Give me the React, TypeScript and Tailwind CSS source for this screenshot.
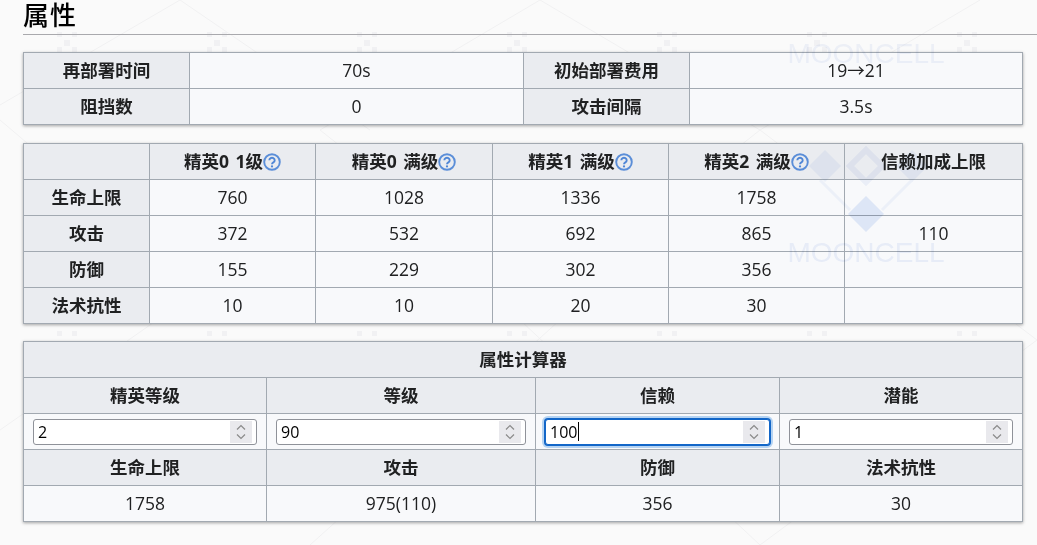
const body = { fontFamily: '"Open Sans", "Noto Sans CJK SC", sans-serif' };

function Help() {
  return (
    <svg viewBox="0 0 18 18" className="inline-block h-[18px] w-[18px] align-[-3px]">
      <circle cx="9" cy="9" r="7.8" fill="none" stroke="#5b8ed8" strokeWidth="1.9" />
      <path d="M6.3 7.2a2.7 2.4 0 1 1 4.1 2.1c-.9.6-1.4 1-1.4 2" fill="none" stroke="#4f86d6" strokeWidth="1.9" />
      <circle cx="9" cy="13.4" r="1.1" fill="#4f86d6" />
    </svg>
  );
}

function Th({ children, colSpan }: { children?: React.ReactNode; colSpan?: number }) {
  return (
    <th colSpan={colSpan} className="h-9 border border-[#a2a9b1] bg-[#eaecf0] p-0 text-center text-[17.5px] font-bold text-[#202122] [word-spacing:2px]">
      {children}
    </th>
  );
}

function Td({ children }: { children?: React.ReactNode }) {
  return (
    <td className="h-9 border border-[#a2a9b1] bg-[#f8f9fb] p-0 text-center text-[17.5px] text-[#202122]">
      {children}
    </td>
  );
}

function Spinner() {
  return (
    <span className="flex h-[22px] w-[22px] shrink-0 items-center justify-center bg-[#e9e9ed]">
      <svg viewBox="0 0 12 18" className="h-[18px] w-[12px]">
        <path d="M2 6.5 6 2.5l4 4M2 11.5l4 4 4-4" fill="none" stroke="#8a8a8a" strokeWidth="1.2" />
      </svg>
    </span>
  );
}

function NumberBox({ value, focused }: { value: string; focused?: boolean }) {
  return (
    <div
      className={
        focused
          ? "flex h-[26px] w-full items-center rounded-[3px] border border-[#1266c8] bg-white pl-[4px] pr-[4px] text-[16px] text-black shadow-[0_0_0_1px_#1266c8,0_0_0_3px_#b5d3f2]"
          : "flex h-[26px] w-full items-center rounded-[3px] border border-[#8f9299] bg-white pl-[4px] pr-[4px] text-[16px] text-black"
      }
    >
      <span className="flex-1 text-left leading-none">
        {value}
        {focused && <span className="ml-px inline-block h-[19px] w-px bg-black align-[-3px]" />}
      </span>
      <Spinner />
    </div>
  );
}

function InputCell({ value, focused }: { value: string; focused?: boolean }) {
  return (
    <td className="h-9 border border-[#a2a9b1] bg-[#f8f9fb] px-[9px] py-0">
      <NumberBox value={value} focused={focused} />
    </td>
  );
}

// faint site watermark behind the tables
function WatermarkBack() {
  const marks = [67, 217, 367, 517, 667, 817, 967];
  return (
    <svg className="pointer-events-none absolute inset-0 h-full w-full" viewBox="0 0 1037 545">
      <g stroke="#f1f1f2" strokeWidth="1" fill="none">
        <path d="M0 105 180 0M0 120 200 290 0 430M180 0 370 130M540 0 320 130 560 320 310 545M540 0 760 130 520 320 760 545M980 0 760 130 1037 340 760 545" />
      </g>
      {marks.map((x) => (
        <g key={x} fill="#f1f1f3">
          <rect x={x - 10} y={32} width={5} height={5} />
          <rect x={x + 5} y={32} width={5} height={5} />
          <rect x={x - 3} y={40} width={6} height={6} />
          <rect x={x - 10} y={47} width={5} height={5} />
          <rect x={x + 5} y={47} width={5} height={5} />
          <rect x={x - 10} y={331} width={5} height={5} />
          <rect x={x + 5} y={331} width={5} height={5} />
        </g>
      ))}
    </svg>
  );
}

function WatermarkLogo() {
  return (
    <svg className="pointer-events-none absolute inset-0 h-full w-full mix-blend-multiply" viewBox="0 0 1037 545">
      <path d="M866 196l18 18-18 18-18-18z" fill="#e4ecfa" />
      <path d="M825 150l16 16-16 16-16-16zM912 150l16 16-16 16-16-16z" fill="#f1f5fc" />
      <path d="M866 150l16 16-16 16-16-16z" fill="none" stroke="#f1f4fb" strokeWidth="6" />
      <path d="M820 180l30 30M912 180l-30 30" stroke="#f3f6fc" strokeWidth="3" />
      <text x="866" y="262" textAnchor="middle" fontSize="28" fontFamily="Liberation Sans" fill="#eef2fb">MOONCELL</text>
      <text x="866" y="63" textAnchor="middle" fontSize="28" fontFamily="Liberation Sans" fill="#f1f4fb">MOONCELL</text>
    </svg>
  );
}

export default function App() {
  return (
    <div className="relative h-[545px] w-[1037px] overflow-hidden bg-[#fafafa]" style={body}>
      <WatermarkBack />
      <div className="relative pl-[23px]">
        <h2
          className="h-[35px] border-b border-[#a9a9ad] pt-[1px] text-[26px] font-medium leading-[32px] tracking-[1px] text-black"
          style={{ fontFamily: '"Liberation Serif", "Noto Sans CJK SC", serif' }}
        >
          属性
        </h2>

        <table className="mt-[17px] w-[1000px] table-fixed border-collapse shadow-[0_1px_3px_rgba(0,0,0,0.35)]">
          <colgroup>
            <col className="w-[166px]" />
            <col className="w-[334px]" />
            <col className="w-[166px]" />
            <col />
          </colgroup>
          <tbody>
            <tr>
              <Th>再部署时间</Th>
              <Td>70s</Td>
              <Th>初始部署费用</Th>
              <Td>19→21</Td>
            </tr>
            <tr>
              <Th>阻挡数</Th>
              <Td>0</Td>
              <Th>攻击间隔</Th>
              <Td>3.5s</Td>
            </tr>
          </tbody>
        </table>

        <table className="mt-[18px] w-[1000px] table-fixed border-collapse shadow-[0_1px_3px_rgba(0,0,0,0.35)]">
          <colgroup>
            <col className="w-[126px]" />
            <col className="w-[166px]" />
            <col className="w-[177px]" />
            <col className="w-[176px]" />
            <col className="w-[176px]" />
            <col />
          </colgroup>
          <tbody>
            <tr>
              <Th />
              <Th>精英0 1级<Help /></Th>
              <Th>精英0 满级<Help /></Th>
              <Th>精英1 满级<Help /></Th>
              <Th>精英2 满级<Help /></Th>
              <Th>信赖加成上限</Th>
            </tr>
            <tr>
              <Th>生命上限</Th>
              <Td>760</Td>
              <Td>1028</Td>
              <Td>1336</Td>
              <Td>1758</Td>
              <Td />
            </tr>
            <tr>
              <Th>攻击</Th>
              <Td>372</Td>
              <Td>532</Td>
              <Td>692</Td>
              <Td>865</Td>
              <Td>110</Td>
            </tr>
            <tr>
              <Th>防御</Th>
              <Td>155</Td>
              <Td>229</Td>
              <Td>302</Td>
              <Td>356</Td>
              <Td />
            </tr>
            <tr>
              <Th>法术抗性</Th>
              <Td>10</Td>
              <Td>10</Td>
              <Td>20</Td>
              <Td>30</Td>
              <Td />
            </tr>
          </tbody>
        </table>

        <table className="mt-[17px] w-[1000px] table-fixed border-collapse shadow-[0_1px_3px_rgba(0,0,0,0.35)]">
          <colgroup>
            <col className="w-[243px]" />
            <col className="w-[269px]" />
            <col className="w-[244px]" />
            <col />
          </colgroup>
          <tbody>
            <tr>
              <Th colSpan={4}>属性计算器</Th>
            </tr>
            <tr>
              <Th>精英等级</Th>
              <Th>等级</Th>
              <Th>信赖</Th>
              <Th>潜能</Th>
            </tr>
            <tr>
              <InputCell value="2" />
              <InputCell value="90" />
              <InputCell value="100" focused />
              <InputCell value="1" />
            </tr>
            <tr>
              <Th>生命上限</Th>
              <Th>攻击</Th>
              <Th>防御</Th>
              <Th>法术抗性</Th>
            </tr>
            <tr>
              <Td>1758</Td>
              <Td>975(110)</Td>
              <Td>356</Td>
              <Td>30</Td>
            </tr>
          </tbody>
        </table>
      </div>
      <WatermarkLogo />
    </div>
  );
}
